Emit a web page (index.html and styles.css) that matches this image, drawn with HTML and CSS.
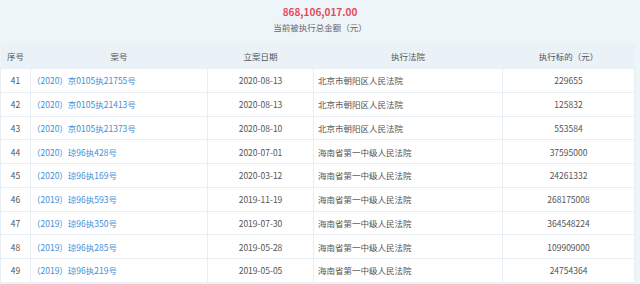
FILE: index.html
```html
<!DOCTYPE html>
<html lang="zh">
<head>
<meta charset="utf-8">
<link rel="stylesheet" href="styles.css">
</head>
<body>
<div class="summary">
  <div class="total">868,106,017.00</div>
  <div class="label">当前被执行总金额（元）</div>
</div>
<table class="list">
  <colgroup>
    <col class="c1"><col class="c2"><col class="c3"><col class="c4"><col class="c5">
  </colgroup>
  <thead>
    <tr><th>序号</th><th>案号</th><th>立案日期</th><th>执行法院</th><th>执行标的（元）</th></tr>
  </thead>
  <tbody>
    <tr><td class="ctr">41</td><td class="case">（2020）京0105执21755号</td><td class="ctr">2020-08-13</td><td>北京市朝阳区人民法院</td><td class="ctr">229655</td></tr>
    <tr><td class="ctr">42</td><td class="case">（2020）京0105执21413号</td><td class="ctr">2020-08-13</td><td>北京市朝阳区人民法院</td><td class="ctr">125832</td></tr>
    <tr><td class="ctr">43</td><td class="case">（2020）京0105执21373号</td><td class="ctr">2020-08-10</td><td>北京市朝阳区人民法院</td><td class="ctr">553584</td></tr>
    <tr><td class="ctr">44</td><td class="case">（2020）琼96执428号</td><td class="ctr">2020-07-01</td><td>海南省第一中级人民法院</td><td class="ctr">37595000</td></tr>
    <tr><td class="ctr">45</td><td class="case">（2020）琼96执169号</td><td class="ctr">2020-03-12</td><td>海南省第一中级人民法院</td><td class="ctr">24261332</td></tr>
    <tr><td class="ctr">46</td><td class="case">（2019）琼96执593号</td><td class="ctr">2019-11-19</td><td>海南省第一中级人民法院</td><td class="ctr">268175008</td></tr>
    <tr><td class="ctr">47</td><td class="case">（2019）琼96执350号</td><td class="ctr">2019-07-30</td><td>海南省第一中级人民法院</td><td class="ctr">364548224</td></tr>
    <tr><td class="ctr">48</td><td class="case">（2019）琼96执285号</td><td class="ctr">2019-05-28</td><td>海南省第一中级人民法院</td><td class="ctr">109909000</td></tr>
    <tr><td class="ctr">49</td><td class="case">（2019）琼96执219号</td><td class="ctr">2019-05-05</td><td>海南省第一中级人民法院</td><td class="ctr">24754364</td></tr>
  </tbody>
</table>
</body>
</html>
```

FILE: styles.css
```css
html, body {
  margin: 0;
  padding: 0;
  background: #eef5f9;
  font-family: "Noto Sans CJK SC", "Noto Sans", sans-serif;
  color: #555;
  text-spacing-trim: space-all;
}

.summary {
  height: 40px;
  text-align: center;
  padding-top: 4px;
  box-sizing: border-box;
}

.total {
  color: #e34a5c;
  font-size: 10px;
  font-weight: bold;
  line-height: 16px;
}

.label {
  font-size: 8.5px;
  line-height: 14px;
  color: #666;
}

.list {
  border-collapse: collapse;
  table-layout: fixed;
  width: 634px;
  margin-top: 4px;
  font-size: 8.5px;
  line-height: 12px;
}

.c1 { width: 30px; }
.c2 { width: 177px; }
.c3 { width: 106px; }
.c4 { width: 189px; }
.c5 { width: 132px; }

.list th {
  height: 24px;
  font-weight: normal;
  background: #eaf2f8;
  color: #555;
  padding: 0;
  text-align: center;
}

.list td {
  height: 22.75px;
  padding: 0 0 0 4px;
  background: #fff;
  border: 1px solid #e8eff4;
  white-space: nowrap;
}

.list td.ctr {
  text-align: center;
  padding-left: 0;
}

.list td.case {
  color: #3f8fd8;
  padding-left: 1px;
}
```
